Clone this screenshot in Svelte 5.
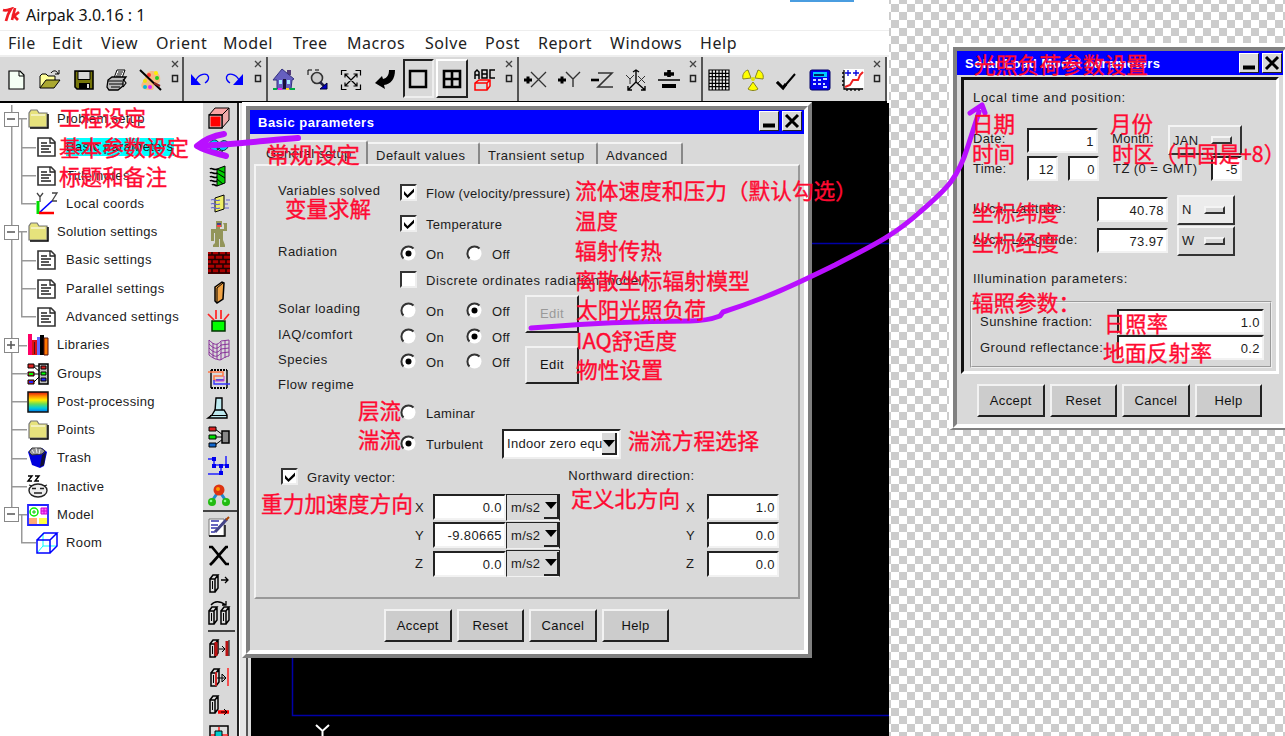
<script>
  const menus = [
    ['File', 44], ['Edit', 49], ['View', 55], ['Orient', 67], ['Model', 70], ['Tree', 54],
    ['Macros', 78], ['Solve', 60], ['Post', 53], ['Report', 72], ['Windows', 90], ['Help', 60]
  ];

  const groups = [
    ['new', 'open', 'save', 'print', 'palette'],
    ['undo', 'redo'],
    ['home', 'zoom', 'expand', 'swoop', 'single', 'quad', 'abc'],
    ['px', 'py', 'mz', 'iso', 'flip'],
    ['mesh', 'rad', 'check', 'calc', 'chart']
  ];

  const box3 = (x, y) =>
    `<g transform="translate(${x} ${y})"><path d="M1 4h5v13h-5zM1 4l3-4h5l-3 4M6 17l3-4V0" fill="#d9d9d9" stroke="#000" stroke-width="1.5"/><path d="M3.5 6v8" stroke="#000"/></g>`;

  const icons = {
    new: '<path d="M3 2h11l4 4v14H3z" fill="#f4fff4" stroke="#000" stroke-width="1.2"/><path d="M13 2v5h5" fill="none" stroke="#000"/>',
    open: '<path d="M1 19V7l2-2h4l2 2h7v4" fill="#ff9" stroke="#000"/><path d="M1 19l6-8h14l-6 8z" fill="#aaa830" stroke="#000"/><path d="M12 4c2-3 6-3 7 1M16 5h4V1" fill="none" stroke="#000"/>',
    save: '<path d="M2 2h18v18H4l-2-2z" fill="#77770a" stroke="#000" stroke-width="1.6"/><path d="M5 2.500h12v8H5z" fill="#d9d9d9" stroke="#000"/><path d="M6 14h11v6H6z"/><path d="M14 15h2v4h-2z" fill="#ddd"/>',
    print: '<path d="M8 9l3-8h8l-3 8z" fill="#fff" stroke="#000"/><path d="M12 3h5M11 5h5M10 7h5" stroke="#000"/><path d="M2 11l4-3h14l-3 4v5l-5 4H3l-2-3z" fill="#bbb" stroke="#000" stroke-width="1.3"/><path d="M2 12h14M3 15h14M5 18h9M17 10l3 4-3 4" fill="none" stroke="#000" stroke-width="1.2"/>',
    palette: '<path d="M7 4C13-1 22 4 20 12c-1 4-5 1-6 4s2 5-5 5-9-4-7-7 3-6 5-10z" fill="#f6bb83"/><g stroke-width="0"><circle cx="9" cy="6" r="2" fill="#f33"/><circle cx="16" cy="4" r="2" fill="#fe0"/><circle cx="17" cy="9" r="2" fill="#2c2"/><circle cx="5" cy="12" r="2" fill="#eee20a"/><circle cx="5" cy="18" r="2" fill="#0bd"/><circle cx="10" cy="18" r="2" fill="#d2f"/></g><path d="M0 1l21 20" stroke="#000" stroke-width="2"/><path d="M14 14l6 3" stroke="#822" stroke-width="2"/>',
    undo: '<path d="M1 5v11h10z" fill="#00f"/><path d="M6 11C9 5 17 3 18.500 8c.5 3-2 5-3.500 6" fill="none" stroke="#00f" stroke-width="1.300"/>',
    redo: '<path d="M20 5v11H10z" fill="#00f"/><path d="M16 11C13 5 5 3 3.500 8c-.5 3 2 5 3.500 6" fill="none" stroke="#00f" stroke-width="1.300"/>',
    home: '<path d="M14 1h4v5h-4z" fill="#543a78"/><path d="M0 11L9 0l12 10-2 1-1 9H4v-9z" fill="#665fc0" stroke="#333080"/><path d="M6 11h3v4H6zM14 11h3v4h-3z" fill="#a9edff"/><path d="M10 10h3v10h-3z" fill="#17123a"/><path d="M0 20h4M17 20h5" stroke="#0a4" stroke-width="2"/><path d="M5 20h4" stroke="#e2e" stroke-width="2"/><path d="M13 20h3" stroke="#fd2" stroke-width="2"/>',
    zoom: '<path d="M1 6V1h4M8 1h4" fill="none" stroke="#000"/><circle cx="10" cy="9" r="5.500" fill="#ccc" stroke="#333" stroke-width="1.600"/><path d="M13 13l5 5" stroke="#224" stroke-width="2.500"/><path d="M20 14v6h-7z" fill="#00c" stroke="#003"/>',
    expand: '<path d="M1.500 6V1.500h5M15.500 1.500h5v5M20.500 15.500v5h-5M6.500 20.500h-5v-5M5 5l12 12M17 5L5 17M5 8.500V5h3.500M13.500 5H17v3.500M17 13.500V17h-3.500M8.500 17H5v-3.500" fill="none" stroke="#000" stroke-width="1.200"/>',
    swoop: '<path d="M21 1c0 9-4 14-11 15l1 4-10-6L8 7l1 3c4-1 6-4 6-9z" fill="#000"/>',
    single: '<path d="M3 3h16v16H3z" fill="none" stroke="#000" stroke-width="2.500"/>',
    quad: '<path d="M3 3h16v16H3zM11 3v16M3 11h16" fill="none" stroke="#000" stroke-width="2.600"/>',
    abc: '<path d="M1 10V3l2-2 2 2v7M1 6h4M8 1h5v8H8zM8 5h5M21 1h-5v8h5" fill="none" stroke="#000" stroke-width="1.500"/><path d="M1 14l4-3h11v6l-3 4H1zM1 14h12v7M13 14l3-3" fill="none" stroke="#f00" stroke-width="1.500"/>',
    px: '<path d="M0 11h8M4 7.500v7" stroke="#000" stroke-width="3"/><path d="M7 3l15 15M22 3L7 18" stroke="#333" stroke-width="1.300"/>',
    py: '<path d="M0 11h8M4 7.500v7" stroke="#000" stroke-width="3"/><path d="M8 3l7 7 7-7M15 10v8" fill="none" stroke="#333" stroke-width="1.400"/>',
    mz: '<path d="M0 11h8" stroke="#000" stroke-width="2.600"/><path d="M7 4h14L7 18h15" fill="none" stroke="#333" stroke-width="1.600"/>',
    iso: '<path d="M11 1v12l-8 8M11 13l9 8M8 3l3-2 3 2M3 17v4h4M16 21h4v-4" fill="none" stroke="#000" stroke-width="1.400"/><path d="M1 6l4 4 4-4M5 10v5M13 7l7 7M20 7l-7 7" fill="none" stroke="#333"/>',
    flip: '<path d="M6 5h10M11 1v7" stroke="#000" stroke-width="3.600"/><path d="M0 11h22" stroke="#000" stroke-width="1.500"/><path d="M4 17h14" stroke="#000" stroke-width="4"/>',
    mesh: '<path d="M1 1h20v20H1zM4.300 1v20M7.600 1v20M11 1v20M14.300 1v20M17.600 1v20M1 4.300h20M1 7.600h20M1 11h20M1 14.300h20M1 17.600h20" fill="#eee" stroke="#000" stroke-width="1.200"/>',
    rad: '<g fill="#ff0" stroke="#888420"><path d="M9 9L1 10C0 6 2 2 6 1zM13 9l8 1c1-4-1-8-5-9zM11 13l-5 7c3 2 7 2 10 0z"/></g><circle cx="11" cy="10" r="2" fill="#dde600"/>',
    check: '<path d="M2 13l6 6L20 5" fill="none" stroke="#000" stroke-width="2"/><path d="M2 13l6 6 3-4" fill="none" stroke="#000" stroke-width="3"/>',
    calc: '<rect x="1" y="1" width="20" height="20" rx="2" fill="#00e" stroke="#006"/><path d="M4 3h14v5H4z" fill="#0cf"/><path d="M5 5h10v2H5z" fill="#026"/><path d="M4 11h3M9 11h3M14 10h4M4 15h3M9 15h3M14 15h2M14 18h4" stroke="#cdf" stroke-width="2.200"/>',
    chart: '<path d="M2 0h20v19H2z" fill="#fff"/><path d="M2 1v19h19M0 4h2M0 8h2M0 12h2M0 16h2M5 20v2M9 20v2M13 20v2M17 20v2" fill="none" stroke="#000" stroke-width="1.300"/><path d="M3 18l5-2 3-5h5l2-5 3-3" fill="none" stroke="#e22" stroke-width="2"/><path d="M3 4h6M6 1v6M11 4h6M14 1v6" stroke="#00d" stroke-width="1.300"/>',

    folder: '<path d="M2 19V5l2-3h6l2 3h8v14z" fill="#e6e27c" stroke="#777" stroke-width="1.200"/><path d="M3 20h18V6" fill="none" stroke="#000" stroke-width="1.500"/><path d="M4 7h14" stroke="#fff"/>',
    doc: '<path d="M2 2h13l4 4v14H2z" fill="#fff" stroke="#333" stroke-width="1.600"/><path d="M14 2v5h5M5 7h6M5 10h10M5 13h8M5 16h10" fill="none" stroke="#222" stroke-width="1.300"/>',
    axes: '<path d="M1 0l3 4 3-4M4 4v5M16 0h5l-5 8h5" fill="none" stroke="#444" stroke-width="1.300"/><path d="M3 20L16 8" stroke="#00f" stroke-width="1.700"/><path d="M2 8v13" stroke="#0d0" stroke-width="3"/><path d="M3 20h15" stroke="#f00" stroke-width="2.500"/>',
    books: '<path d="M1 0h4v21H1z" fill="#f06"/><path d="M5 6h5v15H5z" fill="#d11"/><path d="M7 8h1v12H7z" fill="#511"/><path d="M10 3h4v18h-4z" fill="#66f"/><path d="M13 1h4v20h-4z" fill="#000"/><path d="M17 4h4v17h-4z" fill="#f70" stroke="#511"/>',
    groups: '<path d="M7 3h6M7 11h6M7 19l6-6M6 3l7 6" stroke="#000"/><path d="M1 1h6v4H1zM1 9h6v4H1zM1 17h6v4H1z" stroke="#000" fill="#d22"/><path d="M2 10h4v2H2z" fill="#0f0"/><path d="M2 18h4v2H2z" fill="#22f"/><path d="M12 1h9v20h-9z" fill="#bbb" stroke="#000" stroke-width="1.500"/><path d="M14 3h5v3h-5z" fill="#d22" stroke="#000"/><path d="M14 9h5v3h-5z" fill="#0f0" stroke="#000"/><path d="M14 15h5v3h-5z" fill="#22f" stroke="#000"/>',
    rainbow: '<defs><linearGradient id="rb" x2="0" y2="1"><stop stop-color="#d11"/><stop offset=".2" stop-color="#f80"/><stop offset=".4" stop-color="#fe0"/><stop offset=".6" stop-color="#6d5"/><stop offset=".8" stop-color="#0cd"/><stop offset="1" stop-color="#07e"/></linearGradient></defs><path d="M1 1h20v20H1z" fill="url(#rb)" stroke="#111" stroke-width="1.500"/>',
    trash: '<path d="M1 5l4-4h10l5 4-3 14-4 2-8-3z" fill="#00d"/><path d="M2 5l3-4h9l4 3-3 3-10 1z" fill="#999" stroke="#333"/><path d="M5 3l2 3M9 1l1 5M13 2l-1 5" stroke="#eee"/><path d="M15 8l-2 12 4-2 2-13z" fill="#113"/>',
    sleep: '<path d="M1 0h4L1 5h4M8 0h4L8 5h4" fill="none" stroke="#000" stroke-width="1.400"/><ellipse cx="11" cy="14.500" rx="9" ry="6.500" fill="#eee" stroke="#222" stroke-width="1.400"/><path d="M5 12.500h4M13 12.500h4M7 17h8M2 9l3 1M20 9l-3 1" fill="none" stroke="#222" stroke-width="1.300"/>',
    model: '<path d="M1 1h20v20H1z" fill="#fff" stroke="#22f" stroke-width="1.800"/><circle cx="7" cy="8" r="4" fill="#fff" stroke="#0e0" stroke-width="1.500"/><path d="M5 8h4M7 6v4" stroke="#0c0"/><path d="M14 4h6v6h-6zM14 7h6M17 4v6" fill="#f6f" stroke="#c0c"/><path d="M2 14h8v6H2z" fill="#fa7"/><path d="M12 14h8v6h-8z" fill="#ff4"/>',
    room: '<path d="M7 14h14M7 14V1M7 14l-6 7" stroke="#0ff" fill="none"/><path d="M1 8h13v13H1zM1 8l7-7h13l-7 7M21 1v13l-7 7" fill="none" stroke="#00f" stroke-width="1.500"/>',

    block: '<path d="M1 8l6-7h14l-5 7z" fill="#f9a5a5" stroke="#000"/><path d="M14 8l7-7v12l-7 8z" fill="#eaa" stroke="#000"/><path d="M1 8h13v13H1z" fill="#e5d0d0" stroke="#000" stroke-width="1.300"/><path d="M2.500 9.500h10v10h-10z" fill="#f00"/>',
    fan: '<path d="M1 8c3-6 9-5 10 0 3-5 8-4 10 0-1 6-7 9-10 4-3 6-9 4-10-4z" fill="#0cf" stroke="#033"/><path d="M11 8l-2 5 6 3" fill="none" stroke="#033"/>',
    hx: '<path d="M9 4l8-3v17l-8 3z" fill="#0c0" stroke="#000"/><path d="M9 8l8 5M9 14l6 5M9 4l8 4" stroke="#000"/><path d="M2 4c2-2 4 2 7 0M2 8c2-2 4 2 7 0M2 12c2-2 4 2 7 0M2 16c2-2 4 2 7 0M4 20c2-2 4 2 5 0" fill="none" stroke="#000" stroke-width="1.700"/>',
    opening: '<path d="M7 4l9-3v14l-9 3z" fill="#ee6" stroke="#000"/><path d="M3 6c3-2 4 2 9 0M3 10c3-2 4 2 9 0M3 14c3-2 4 2 9 0M18 6h4M17 10h3M17 14h4" fill="none" stroke="#66c" stroke-width="1.200"/>',
    person: '<path d="M8-2h6v6h-2v2h4V2L15 0h4v8h-4v9l2 5v2h-5v-8h-1v8H5v-2l2-2V10H6v8H3V6h5z" fill="#93955a"/><path d="M9 0h4v3H9z" fill="#448"/><path d="M9 2h4v2H9z" fill="#f44"/>',
    bricks: '<path d="M0 0h22v22H0z" fill="#a00"/><path d="M0 3h22M0 7.500h22M0 12h22M0 16.500h22M0 21h22M4 0v3M11 0v3M18 0v3M7 3v4M15 3v4M4 8v4M11 8v4M18 8v4M7 12v4M15 12v4M4 17v4M11 17v4M18 17v4" stroke="#200" stroke-width="1.600"/>',
    plate: '<path d="M7 6l7-5 2 1-1 16-6 4-2-2z" fill="#f0a345" stroke="#000" stroke-width="1.500"/><path d="M9 7l6-5M9 7v14" stroke="#000"/>',
    source: '<path d="M4 11h13v10H4z" fill="#0f0" stroke="#030" stroke-width="1.500"/><path d="M0 4l6 6M8 0v9M13 0v9M21 4l-5 6" stroke="#f22" stroke-width="1.700"/>',
    duct: '<path d="M1 1c5 5 8 6 12 1l8-1v16c-5 1-6 3-9 4-6-1-7-2-11-5z" fill="#d9d9d9" stroke="#839"/><path d="M5 4v15M9 5v15M13 3v18M17 2v17M1 5c5 5 8 6 12 1l8-1M1 9c5 5 8 6 12 1l8-1M1 13c5 5 8 6 12 1l8-1" fill="none" stroke="#839"/>',
    coil: '<path d="M3 2h16M3 20h16" stroke="#000" stroke-width="2" stroke-dasharray="2 1"/><path d="M3 2v18M19 2v18" stroke="#000" stroke-width="1.400"/><path d="M0 4h15v4H6v4h10" fill="none" stroke="#f74" stroke-width="1.500"/><path d="M6 12v4h16M8 12h8" fill="none" stroke="#33f" stroke-width="1.400"/><path d="M16 8v5H7" fill="none" stroke="#c4c"/>',
    hood: '<path d="M8 1h6v13H7z" fill="#bdeaf0" stroke="#000" stroke-width="1.400"/><path d="M4 18l3-5h9l3 5v3H0z" fill="#bdeaf0" stroke="#000" stroke-width="1.400"/><path d="M2 18.500h17" stroke="#000"/>',
    network: '<path d="M7 3l8 6M7 11h8M7 19l8-6" stroke="#000"/><path d="M1 1h7v4H1z" fill="#d22" stroke="#000"/><path d="M1 9h7v4H1z" fill="#0d0" stroke="#000"/><path d="M1 17h7v4H1z" fill="#16c" stroke="#000"/><path d="M14 5h7v12h-7z" fill="#888" stroke="#000" stroke-width="1.500"/>',
    wires: '<path d="M0 4h6v6h12V1M13 10v9H0" fill="none" stroke="#22f" stroke-width="1.500"/><path d="M4 2h4v4H4zM4 9h4v4H4zM11 9h4v4h-4zM17 9h4v4h-4zM11 16h4v4h-4z" fill="#00e"/>',
    molecule: '<path d="M10 8L4 17M12 8l6 9" stroke="#28c" stroke-width="3"/><circle cx="11" cy="6" r="5.500" fill="#d31"/><circle cx="10" cy="5" r="2" fill="#f90"/><circle cx="4" cy="18" r="4" fill="#2b1"/><circle cx="18" cy="18" r="4" fill="#2b1"/><circle cx="3" cy="17" r="1.300" fill="#8f8"/><circle cx="17" cy="17" r="1.300" fill="#8f8"/>',
    edit: '<path d="M1 3h15v17H1z" fill="#fff" stroke="#777"/><path d="M1 20h16V9" fill="none" stroke="#000" stroke-width="1.400"/><path d="M3 5h8M3 9h7M3 12h6M3 16h4" stroke="#33a" stroke-width="1.300"/><path d="M7 16L19 3" stroke="#448" stroke-width="3"/><path d="M18 4l3-3" stroke="#a40" stroke-width="2"/>',
    delete: '<path d="M1 2h3l14 17h3M20 2h-2L5 17l-3 3" fill="none" stroke="#000" stroke-width="2.700"/>',
    move: box3(1, 2) + '<path d="M13 7h7M17 4l3 3-3 3" fill="none" stroke="#000" stroke-width="1.300"/>',
    copy: box3(0, 5) + box3(12, 5) + '<path d="M3 3c4-5 9-4 15 0M18-1v4h-4" fill="none" stroke="#000" stroke-width="1.300"/>',
    alignA: box3(1, 2) + '<path d="M8 4v14M19 3v15" stroke="#b11" stroke-width="3"/><path d="M11 11h5M14 8l3 3-3 3M21 2v16" fill="none" stroke="#000"/>',
    alignB: box3(2, 2) + '<path d="M8 5v14M20 1v18" stroke="#f22" stroke-width="1.500"/><path d="M9 11h8M14 7l4 4-4 4z" fill="none" stroke="#000"/>',
    alignC: box3(1, 1) + '<path d="M10 17h11" stroke="#f00" stroke-width="3.500"/><path d="M13 17h6M16 14l3 3-3 3" fill="none" stroke="#000"/>',
    center: '<path d="M2 2h18v19H2z" fill="#ddd" stroke="#000" stroke-width="1.500"/><path d="M11 3v18M3 11h17" stroke="#f22" stroke-width="1.500"/><path d="M7 7h7v7H7z" fill="#0cc" stroke="#000"/>'
  };

  const tree = [
    { t: 'Problem setup', i: 'folder', e: '-', kids: true },
    { t: 'Basic parameters', i: 'doc', l: 2, sel: true },
    { t: 'Title/notes', i: 'doc', l: 2 },
    { t: 'Local coords', i: 'axes', l: 2, end: true },
    { t: 'Solution settings', i: 'folder', e: '-', kids: true },
    { t: 'Basic settings', i: 'doc', l: 2 },
    { t: 'Parallel settings', i: 'doc', l: 2 },
    { t: 'Advanced settings', i: 'doc', l: 2, end: true },
    { t: 'Libraries', i: 'books', e: '+' },
    { t: 'Groups', i: 'groups' },
    { t: 'Post-processing', i: 'rainbow' },
    { t: 'Points', i: 'folder' },
    { t: 'Trash', i: 'trash' },
    { t: 'Inactive', i: 'sleep' },
    { t: 'Model', i: 'model', e: '-', last: true, kids: true },
    { t: 'Room', i: 'room', l: 2, end: true, last: true }
  ];

  const objects = ['block', 'fan', 'hx', 'opening', 'person', 'bricks', 'plate', 'source', 'duct', 'coil', 'hood', 'network', 'wires', 'molecule'];
  const edits = ['edit', 'delete', 'move', 'copy'];
  const aligns = ['alignA', 'alignB', 'alignC', 'center'];

  const actions = ['Accept', 'Reset', 'Cancel', 'Help'];
  const gravity = [['X', '0.0'], ['Y', '-9.80665'], ['Z', '0.0']];
  const north = [['X', '1.0'], ['Y', '0.0'], ['Z', '0.0']];

  // [text, x, baseline, width]
  const notes = [
    ['工程设定', 59, 126, 87], ['基本参数设定', 59, 155.500, 130], ['标题和备注', 59, 185, 108],
    ['常规设定', 266, 162.500, 94], ['变量求解', 285, 217, 86],
    ['流体速度和压力（默认勾选）', 575, 199, 282], ['温度', 575, 229, 43], ['辐射传热', 575, 259, 87],
    ['离散坐标辐射模型', 575, 289, 175], ['太阳光照负荷', 576, 318, 130],
    ['IAQ舒适度', 576, 348.500, 101], ['物性设置', 576, 378, 87],
    ['层流', 358, 418.500, 43], ['湍流', 358, 448, 43], ['湍流方程选择', 628, 448.500, 131],
    ['重力加速度方向', 261, 511.500, 152], ['定义北方向', 571, 507, 109],
    ['光照负荷参数设置', 974, 73, 174], ['日期', 972, 132, 43], ['月份', 1110, 132, 43],
    ['时间', 972, 162, 43], ['时区（中国是+8）', 1112, 161.500, 173],
    ['坐标纬度', 972, 221, 87], ['坐标经度', 972, 251, 87], ['辐照参数：', 972, 311, 108],
    ['日照率', 1104, 331.500, 64], ['地面反射率', 1103, 361, 109]
  ];
</script>

{#snippet icon(name)}
  <svg class="icon" width="22" height="22" viewBox="0 0 22 22">{@html icons[name]}</svg>
{/snippet}

{#snippet radio(label, on)}
  <span class="opt">
    <svg width="17" height="17" viewBox="0 0 17 17">
      <circle cx="8.500" cy="8.500" r="7" fill="#fff" />
      <path d="M3.500 13.500A7 7 0 0 1 13.500 3.500" fill="none" stroke="#333" stroke-width="2" />
      {#if on}<circle cx="8.500" cy="8.500" r="3" />{/if}
    </svg>
    <span>{label}</span>
  </span>
{/snippet}

{#snippet check(label, on)}
  <span class="opt">
    <span class="box">
      {#if on}<svg width="14" height="14" viewBox="0 0 14 14"><path d="M2 5l3.500 4L12 2.500v3.500L5.500 12 2 8.500z" /></svg>{/if}
    </span>
    <span>{label}</span>
  </span>
{/snippet}

{#snippet titlebar(title)}
  <div class="title">
    <b>{title}</b>
    <span class="wbtn"><svg width="18" height="18"><path d="M3 13.500h12" stroke="#000" stroke-width="4" /></svg></span>
    <span class="wbtn"><svg width="18" height="18"><path d="M3 3l12 12M15 3L3 15" stroke="#000" stroke-width="3" /></svg></span>
  </div>
{/snippet}

{#snippet buttons()}
  <div class="actions">
    {#each actions as a}<button>{a}</button>{/each}
  </div>
{/snippet}

<div class="screen">
  <div class="app">
    <div class="caption">
      <svg width="19" height="16" viewBox="0 0 19 16"><path d="M1 3c3 1 5 0 8-1C7 5 5 9 4 14M13 1l-3 12M17 5l-5 4 4 4M10 9l2-1" fill="none" stroke="#f01c24" stroke-width="2.700" /></svg>
      <span>Airpak 3.0.16 : 1</span>
      <i></i>
    </div>
    <nav>
      {#each menus as [m, w]}<span style="width:{w}px">{m}</span>{/each}
    </nav>
    <div class="toolbar">
      {#each groups as g}
        <div class="group">
          {#each g as n}
            <span class="tool" class:sunk={n === 'single'} class:up={n === 'quad'}>{@render icon(n)}</span>
          {/each}
          <svg class="grip" width="14" height="44" viewBox="0 0 14 44"><path d="M4 4l6 6M10 4l-6 6" stroke="#444" stroke-width="1.300" /><path d="M4.500 18.500h5v6h-5z" fill="none" stroke="#222" stroke-width="1.500" /></svg>
        </div>
      {/each}
    </div>
    <div class="work">
      <div class="tree">
        {#each tree as n}
          <div class="node" class:sub={n.l === 2} class:end={n.end} class:last={n.last} class:kids={n.kids}>
            <span class="rail">{#if n.e}<span class="exp">
              <svg width="12" height="12"><path d={n.e === '+' ? 'M2 6h8M6 2v8' : 'M2 6h8'} stroke="#555" stroke-width="1.500" /></svg>
            </span>{/if}</span>
            {#if n.l === 2}<span class="elbow"></span>{/if}
            {@render icon(n.i)}
            <span class="name" class:sel={n.sel}>{n.t}</span>
          </div>
        {/each}
      </div>
      <div class="strip">
        {#each objects as o}<div class="obj">{@render icon(o)}</div>{/each}
        <hr />
        {#each edits as o}<div class="obj e">{@render icon(o)}</div>{/each}
        <hr class="short" />
        {#each aligns as o}<div class="obj e">{@render icon(o)}</div>{/each}
      </div>
      <div class="sash"></div>
      <svg class="view" width="638" height="633" viewBox="251 103 638 633">
        <path d="M292.500 240v475.500H889M292 243.500H889" fill="none" stroke="#0000a8" stroke-width="1.500" />
        <path d="M316 725l6.500 6 6.500-6M322.500 731v6" fill="none" stroke="#fff" stroke-width="2" />
      </svg>
    </div>
  </div>

  <section class="dialog basic">
    <div class="inner">
      {@render titlebar('Basic parameters')}
      <div class="tabs">
        <span class="tab on">General setup</span>
        <span class="tab t2">Default values</span>
        <span class="tab t3">Transient setup</span>
        <span class="tab t4">Advanced</span>
      </div>
      <div class="pane">
        <div class="row r31"><span class="lab">Variables solved</span>{@render check('Flow (velocity/pressure)', true)}</div>
        <div class="row r31"><span class="lab"></span>{@render check('Temperature', true)}</div>
        <div class="row r28"><span class="lab">Radiation</span>{@render radio('On', true)}{@render radio('Off', false)}</div>
        <div class="row r28 disc"><span class="lab"></span>{@render check('Discrete ordinates radiation model', false)}</div>
        <div class="row r30"><span class="lab">Solar loading</span>{@render radio('On', false)}{@render radio('Off', true)}<button class="edit off">Edit</button></div>
        <div class="row r23"><span class="lab">IAQ/comfort</span>{@render radio('On', false)}{@render radio('Off', true)}</div>
        <div class="row r26"><span class="lab">Species</span>{@render radio('On', true)}{@render radio('Off', false)}<button class="edit">Edit</button></div>
        <div class="row r24"><span class="lab">Flow regime</span></div>
        <div class="row r29"><span class="lab"></span>{@render radio('Laminar', false)}</div>
        <div class="row r33"><span class="lab"></span>{@render radio('Turbulent', true)}
          <span class="combo"><span>Indoor zero equ</span><svg width="14" height="22"><path d="M1 7h12l-6 7z" /></svg></span>
        </div>
        <div class="row r33 grav">{@render check('Gravity vector:', true)}<span class="northlab">Northward direction:</span></div>
        <div class="vectors">
          <div class="vec">
            {#each gravity as [k, v]}
              <div class="comp"><span>{k}</span><span class="field">{v}</span><span class="unit">m/s2<svg width="14" height="24"><path d="M1 7h12l-6 7z" /></svg></span></div>
            {/each}
          </div>
          <div class="vec north">
            {#each north as [k, v]}
              <div class="comp"><span>{k}</span><span class="field">{v}</span></div>
            {/each}
          </div>
        </div>
      </div>
      {@render buttons()}
    </div>
  </section>

  <section class="dialog solar">
    <div class="inner">
      {@render titlebar('Solar Load Model parameters')}
      <div class="well">
        <div class="head">Local time and position:</div>
        <div class="srow date"><span class="k">Date:</span><span class="field w71">1</span><span class="m">Month:</span><span class="optmenu jan">JAN<i></i></span></div>
        <div class="srow time"><span class="k">Time:</span><span class="field w31">12</span><span class="field w31 gap">0</span><span class="m">TZ (0 = GMT)</span><span class="field w31">-5</span></div>
        <div class="srow lat"><span class="kk">Local Latitude:</span><span class="field w71">40.78</span><span class="optmenu n">N<i></i></span></div>
        <div class="srow lon"><span class="kk">Local Longitude:</span><span class="field w71">73.97</span><span class="optmenu">W<i></i></span></div>
        <div class="head ill">Illumination parameters:</div>
        <div class="frame">
          <div class="srow fr"><span class="q">Sunshine fraction:</span><span class="field">1.0</span></div>
          <div class="srow fr"><span class="q">Ground reflectance:</span><span class="field">0.2</span></div>
        </div>
      </div>
      {@render buttons()}
    </div>
  </section>

  <svg class="notes" width="1285" height="736" viewBox="0 0 1285 736">
    <g fill="none" stroke="#b90fff" stroke-width="5" stroke-linecap="round" stroke-linejoin="round">
      <path d="M298 138C270 140 240 144 198 146M224 134C212 136 204 140 197 146C205 151 215 153 226 156" stroke-width="6" />
      <path d="M531 328C590 323 640 321 690 321C705 321 712 319 720 316L723 312C770 297 800 282 835 265C865 249 890 239 920 212C948 188 958 178 968 146L979 112M970 113L982 105L985 113" />
    </g>
    {#each notes as [t, x, y, w]}
      <text {x} {y} textLength={w} lengthAdjust="spacingAndGlyphs">{t}</text>
    {/each}
  </svg>
</div>

<style>
  :global(body) { background: #fff; overflow: hidden; }
  .screen {
    position: relative; width: 1285px; height: 736px; overflow: hidden;
    font: 13px "Liberation Sans", Arial, sans-serif; letter-spacing: .3px; color: #1c1c1c;
    background: repeating-conic-gradient(#ccc 0 25%, #fff 0 50%) 3px 4px / 16px 16px;
  }
  .screen * { box-sizing: border-box; }
  .icon { display: block; flex: none; overflow: visible; }
  .app { width: 889px; height: 736px; background: #fff; display: flex; flex-direction: column; }
  .caption { height: 31px; display: flex; align-items: center; gap: 5px; padding-left: 2px; border-bottom: 1px solid #eee; font: 16px "Noto Sans", sans-serif; letter-spacing: 0; color: #111; }
  .caption i { width: 64px; height: 2px; background: #4a9de0; align-self: flex-start; margin-left: 640px; }
  nav { height: 26px; display: flex; align-items: center; padding-left: 8px; border-bottom: 2px solid #eee; font: 16px "Noto Sans", sans-serif; letter-spacing: .55px; color: #222; }
  nav span { flex: none; }
  .toolbar { height: 46px; display: flex; background: #d9d9d9; border-bottom: 2px solid #000; width: 887px; }
  .group { display: flex; flex: none; height: 44px; border-right: 2px solid #555; padding-right: .500px; }
  .grip { flex: none; }
  .tool { width: 33.500px; flex: none; display: flex; align-items: center; justify-content: center; padding-top: 2px; }
  .sunk { border: 2px solid; border-color: #222 #eee #eee #222; margin: 2px 1px 3px 1px; width: 31.500px; padding: 0; }
  .up { border: 2px solid; border-color: #fff #222 #222 #fff; margin: 2px 1px 3px 1px; width: 31.500px; padding: 0; }
  .work { flex: 1; display: flex; min-height: 0; overflow: hidden; }
  .tree { width: 203px; padding-top: 2px; background: #fff; }
  .node { height: 28.270px; display: flex; align-items: center; }
  .node.kids { background: linear-gradient(#999, #999) 21px 100% / 1.500px 50% no-repeat; }
  .rail { width: 27px; height: 100%; display: flex; align-items: center; padding-left: 4px; background: linear-gradient(#999, #999) 11px 0 / 1.500px 100% no-repeat, linear-gradient(#999, #999) 11px 50% / 16px 1.500px no-repeat; }
  .sub .rail { width: 21px; background: linear-gradient(#999, #999) 11px 0 / 1.500px 100% no-repeat; }
  .last .rail { background-size: 1.500px 50%, 16px 1.500px; }
  .sub.last .rail { background: none; }
  .elbow { width: 15px; height: 100%; background: linear-gradient(#999, #999) 0 0 / 1.500px 100% no-repeat, linear-gradient(#999, #999) 0 50% / 15px 1.500px no-repeat; }
  .end .elbow { background-size: 1.500px 50%, 15px 1.500px; }
  .exp { width: 15px; height: 15px; border: 1.500px solid #888; background: #fff; display: flex; }
  .name { margin-left: 8px; line-height: 18px; }
  .sub .name { letter-spacing: .4px; }
  .sel { background: #0ff; }
  .strip { width: 36px; background: #d9d9d9; border-right: 2px solid #222; overflow: hidden; padding-left: 5px; }
  .obj { height: 29px; display: flex; align-items: center; }
  .obj.e { height: 28.500px; }
  hr { margin: 1px 0 1px -5px; border: 0; height: 2px; background: #444; }
  hr.short { margin: 3px 2px 3px 0; }
  .sash { width: 12px; background: linear-gradient(90deg, #fff 0 1px, #e6e6e6 1px 7px, #555 7px 9px, #ddd 9px 12px); }
  .view { display: block; background: #000; flex: none; }

  .dialog { position: absolute; border: 4px solid; border-color: #fff #808080 #808080 #fff; background: #d9d9d9; }
  .inner { height: 100%; border: 4px solid; border-color: #808080 #fff #fff #808080; }
  .basic { left: 242px; top: 102px; width: 570px; height: 556px; }
  .solar { left: 949px; top: 43px; width: 342px; height: 387px; border-bottom-width: 2px; }
  .title { height: 24px; background: #00f; color: #fff; display: flex; align-items: center; padding: 0 2px 0 8px; gap: 3px; }
  .title b { flex: 1; letter-spacing: .5px; }
  .wbtn { width: 20px; height: 20px; background: #d9d9d9; border: 1px solid; border-color: #fff #222 #222 #fff; display: flex; }
  .basic .wbtn { position: relative; top: -1px; }
  .solar .title { padding-right: 1px; width: 326px; }

  .tabs { height: 30px; display: flex; align-items: flex-end; padding-left: 4px; letter-spacing: .5px; }
  .tab { height: 22px; line-height: 24px; border-top: 2px solid #f4f4f4; border-right: 2px solid #888; border-radius: 0 3px 0 0; white-space: nowrap; flex: none; }
  .tab.on { width: 114px; height: 24px; padding-left: 12px; line-height: 24px; letter-spacing: .3px; }
  .t2 { width: 112px; padding-left: 8px; }
  .t3 { width: 118px; padding-left: 8px; }
  .t4 { width: 85px; padding-left: 8px; }
  .pane { margin-left: 4px; width: 546px; height: 435px; border: 2px solid; border-color: #f4f4f4 #999 #999 #f4f4f4; padding: 11px 0 0 22px; }
  .row { display: flex; align-items: center; white-space: nowrap; }
  .r31 { height: 31px; } .r28 { height: 28px; } .r30 { height: 30px; } .r23 { height: 23px; }
  .r26 { height: 26px; } .r24 { height: 24px; } .r29 { height: 29px; } .r33 { height: 33px; }
  .lab { width: 122px; margin-top: -4px; letter-spacing: .5px; }
  .disc { padding-bottom: 3px; }
  .opt { display: flex; align-items: center; gap: 9px; min-width: 66px; flex: none; }
  .opt svg { flex: none; }
  .opt > span:last-child { position: relative; top: 1px; }
  .disc .opt { letter-spacing: .55px; }
  .box { width: 17px; height: 17px; background: #fff; border: 2px solid; border-color: #333 #eee #eee #333; }
  .box svg { display: block; }
  button { font: inherit; letter-spacing: .4px; color: #111; border: 2px solid; border-color: #f2f2f2 #222 #222 #f2f2f2; background: #ccc; padding: 0 0 1px; }
  .edit { width: 54px; height: 38px; margin: 8px 0 0 -7px; background: #d9d9d9; flex: none; }
  .off { color: #999; }
  .combo { width: 119px; height: 30px; margin-left: 14px; border: 2px solid; border-color: #222 #eee #eee #222; background: #fff; display: flex; align-items: center; padding: 2px; overflow: hidden; flex: none; }
  .row .opt:has(+ .combo) { min-width: 88px; }
  .combo > span { flex: 1; overflow: hidden; padding-left: 1px; }
  .combo svg, .unit svg { background: #d9d9d9; border-right: 2px solid #222; border-bottom: 2px solid #222; flex: none; width: 15px; }
  .grav { padding-left: 3px; }
  .northlab { margin-left: 173px; margin-top: -3px; letter-spacing: .5px; }
  .vectors { display: flex; padding-left: 137px; gap: 126px; }
  .vec { display: flex; flex-direction: column; flex: none; }
  .comp { height: 28.300px; display: flex; align-items: center; }
  .comp > span:first-child { width: 18px; flex: none; }
  .north .comp > span:first-child { width: 21px; }
  .north .field { width: 72px; }
  .field { height: 26px; width: 73px; border: 2px solid; border-color: #222 #f2f2f2 #f2f2f2 #222; background: #fff; text-align: right; line-height: 23px; padding-right: 2px; white-space: nowrap; flex: none; letter-spacing: .4px; }
  .unit { width: 54px; height: 27px; border: 1.500px solid; border-color: #222 #222 #f2f2f2 #222; display: flex; align-items: center; justify-content: space-between; padding-left: 4px; flex: none; }
  .actions { display: flex; gap: 5px; padding: 10px 0 0 134px; }
  .actions button { width: 67.600px; height: 33px; }

  .well { width: 318px; height: 297px; margin: 2px 0 0 4px; border: 3px solid; border-color: #111 #fff #fff #111; padding-left: 6px; }
  .head { height: 34px; line-height: 35px; padding-left: 3px; letter-spacing: .68px; }
  .srow { display: flex; align-items: center; white-space: nowrap; }
  .date { height: 41px; padding: 11px 0 0 3px; }
  .date .k, .date .m { position: relative; top: -2px; }
  .k { width: 54px; }
  .kk { width: 124px; margin-top: -3px; letter-spacing: .6px; }
  .w71 { width: 71px; height: 25px; }
  .w31 { width: 31px; height: 25px; }
  .gap { margin-left: 10px; }
  .m { margin-left: 14px; width: 56px; }
  .optmenu { width: 58px; height: 30px; margin-left: 9px; border: 2px solid; border-color: #f4f4f4 #333 #333 #f4f4f4; display: flex; align-items: center; justify-content: space-between; padding: 0 8px 0 3px; }
  .optmenu i { width: 21px; height: 8px; border: 2px solid; border-color: #f4f4f4 #333 #333 #f4f4f4; background: #d9d9d9; }
  .jan { width: 74px; margin-left: 0; }
  .n { background: #ececec; }
  .time { height: 28px; padding-left: 3px; margin-top: -1px; }
  .time .m { width: 98px; letter-spacing: .45px; }
  .lat { height: 31px; padding-left: 3px; margin-top: 12px; }
  .lon { height: 31px; padding-left: 3px; }
  .ill { height: 45px; line-height: 46px; }
  .frame { width: 302px; height: 67px; border: 2px groove #eee; padding: 6px 0 0 8px; }
  .fr { height: 25.500px; }
  .q { width: 137px; letter-spacing: .48px; }
  .fr .field { width: 147px; height: 25px; }
  .solar .actions { padding: 10px 0 0 20px; }

  .notes { position: absolute; left: 0; top: 0; pointer-events: none; }
  .notes text { font: 21.600px "Noto Sans CJK SC", sans-serif; fill: #ff0a32; stroke: #ff0a32; stroke-width: .35px; letter-spacing: 0; }
</style>
